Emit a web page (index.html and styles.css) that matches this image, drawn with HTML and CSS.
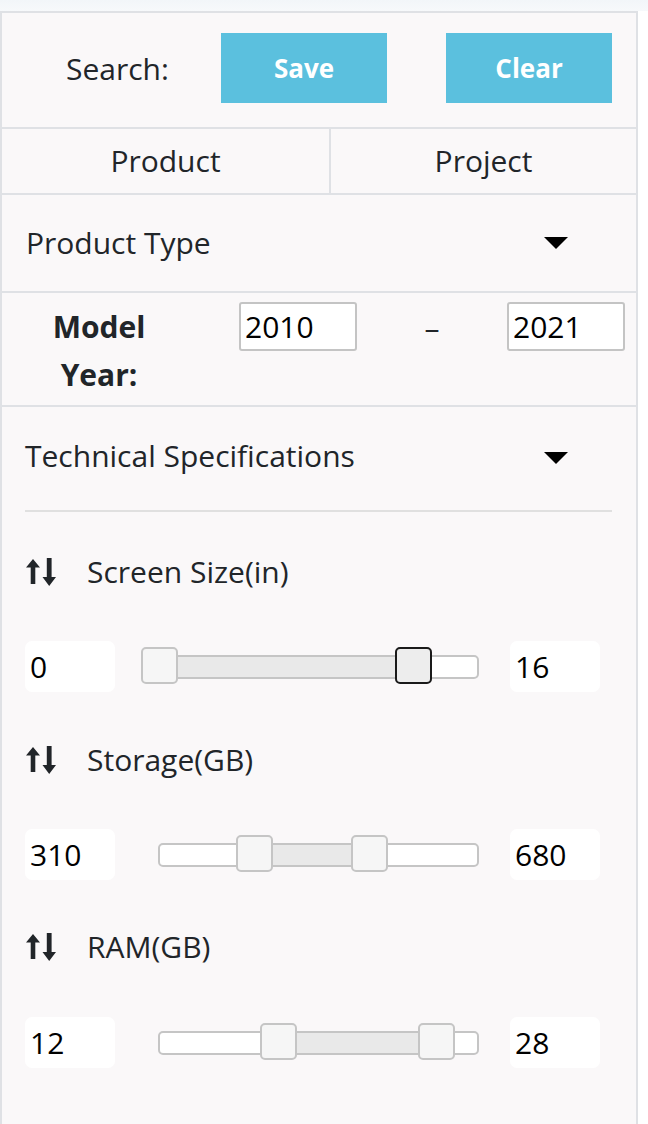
FILE: index.html
```html
<!DOCTYPE html>
<html>
<head>
<meta charset="utf-8">
<link rel="stylesheet" href="styles.css">
</head>
<body>
<div class="topband"></div>
<div class="panel">
  <div class="row search-row">
    <span class="search-label">Search:</span>
    <button class="btn">Save</button>
    <button class="btn">Clear</button>
  </div>
  <div class="row tabs">
    <div class="tab">Product</div>
    <div class="tab">Project</div>
  </div>
  <div class="row dropdown-row">
    <span>Product Type</span>
    <span class="caret"></span>
  </div>
  <div class="row year-row">
    <div class="year-label">Model<br>Year:</div>
    <input class="year-input first" type="text" value="2010">
    <span class="dash">–</span>
    <input class="year-input" type="text" value="2021">
  </div>
  <div class="tech">
    <div class="tech-head">
      <span>Technical Specifications</span>
      <span class="caret"></span>
    </div>
    <div class="divider"></div>

    <div class="spec first">
      <div class="spec-head">
        <svg class="sort-icon" viewBox="0 0 30 28" width="30" height="28"><path d="M7 1 L14 9.5 H9.3 V26 H4.7 V9.5 H0 Z" fill="#212529"/><path d="M20.8 0 H25.6 V19 H30 L23.2 28 L16.5 19 H20.8 Z" fill="#212529"/></svg>
        <span>Screen Size(in)</span>
      </div>
      <div class="slider-row">
        <input class="num" type="text" value="0">
        <div class="track">
          <div class="range" style="left:0%;width:80%"></div>
          <div class="handle" style="left:0%"></div>
          <div class="handle active" style="left:80%"></div>
        </div>
        <input class="num" type="text" value="16">
      </div>
    </div>

    <div class="spec">
      <div class="spec-head">
        <svg class="sort-icon" viewBox="0 0 30 28" width="30" height="28"><path d="M7 1 L14 9.5 H9.3 V26 H4.7 V9.5 H0 Z" fill="#212529"/><path d="M20.8 0 H25.6 V19 H30 L23.2 28 L16.5 19 H20.8 Z" fill="#212529"/></svg>
        <span>Storage(GB)</span>
      </div>
      <div class="slider-row">
        <input class="num" type="text" value="310">
        <div class="track">
          <div class="range" style="left:30.1%;width:36.1%"></div>
          <div class="handle" style="left:30.1%"></div>
          <div class="handle" style="left:66.2%"></div>
        </div>
        <input class="num" type="text" value="680">
      </div>
    </div>

    <div class="spec last">
      <div class="spec-head">
        <svg class="sort-icon" viewBox="0 0 30 28" width="30" height="28"><path d="M7 1 L14 9.5 H9.3 V26 H4.7 V9.5 H0 Z" fill="#212529"/><path d="M20.8 0 H25.6 V19 H30 L23.2 28 L16.5 19 H20.8 Z" fill="#212529"/></svg>
        <span>RAM(GB)</span>
      </div>
      <div class="slider-row">
        <input class="num" type="text" value="12">
        <div class="track">
          <div class="range" style="left:37.5%;width:50%"></div>
          <div class="handle" style="left:37.5%"></div>
          <div class="handle" style="left:87.4%"></div>
        </div>
        <input class="num" type="text" value="28">
      </div>
    </div>
  </div>
</div>
</body>
</html>
```
FILE: styles.css
```css
html, body {
  margin: 0;
  padding: 0;
  background: #ffffff;
}
body {
  font-family: "Open Sans", "Noto Sans", sans-serif;
  color: #212529;
  font-size: 30px;
  line-height: 1.2;
  width: 648px;
  height: 1124px;
  overflow: hidden;
}
.topband {
  height: 11px;
  background: linear-gradient(#f2f6f9, #f7f9fb);
}
.panel {
  width: 634px;
  height: 1111px;
  border: 2px solid #dfe1e5;
  border-bottom: none;
  background: #faf8f9;
}
.row {
  border-bottom: 2px solid #dfe1e5;
  display: flex;
  align-items: center;
  box-sizing: content-box;
}
.search-row {
  height: 94px;
  padding-top: 20px;
  padding-left: 64px;
  align-items: flex-start;
}
.search-label {
  width: 155px;
  height: 70px;
  line-height: 72px;
}
.btn {
  width: 166px;
  height: 70px;
  border: none;
  background: #5bc0de;
  color: #ffffff;
  font-family: inherit;
  font-size: 26px;
  font-weight: 700;
  padding: 0;
}
.btn + .btn {
  margin-left: 59px;
}
.tabs {
  height: 64px;
}
.tab {
  height: 100%;
  display: flex;
  align-items: center;
  justify-content: center;
}
.tab:first-child {
  width: 327px;
  border-right: 2px solid #dfe1e5;
}
.tab:last-child {
  flex: 1;
}
.dropdown-row {
  height: 96px;
  padding-left: 24px;
  padding-right: 68px;
  justify-content: space-between;
}
.caret {
  width: 0;
  height: 0;
  border-left: 12px solid transparent;
  border-right: 12px solid transparent;
  border-top: 12px solid #000;
}
.year-row {
  height: 103px;
  padding-top: 9px;
  align-items: flex-start;
}
.year-label {
  width: 190px;
  margin-top: 1px;
  text-align: center;
  font-weight: 700;
  line-height: 48px;
  margin-left: 2px;
}
.year-input {
  width: 118px;
  height: 49px;
  box-sizing: border-box;
  border: 2px solid #c4c4c4;
  border-radius: 3px;
  background: #fff;
  font-family: inherit;
  font-size: 30px;
  color: #000;
  padding: 0 4px;
}
.year-input.first {
  margin-left: 45px;
}
.dash {
  width: 150px;
  text-align: center;
  line-height: 52px;
}
.tech {
  padding: 0 24px 0 23px;
}
.tech-head {
  height: 103px;
  box-sizing: border-box;
  padding-bottom: 5px;
  display: flex;
  align-items: center;
  justify-content: space-between;
  padding-right: 44px;
}
.tech-head .caret {
  margin-top: 4px;
}
.divider {
  height: 2px;
  background: #e0e0e0;
}
.spec-head {
  height: 36px;
  margin-top: 50px;
  display: flex;
  align-items: center;
  gap: 31px;
}
.spec.first .spec-head {
  margin-top: 42px;
}
.spec.last .spec-head {
  margin-top: 49px;
}
.sort-icon {
  display: block;
  margin-left: 1px;
}
.slider-row {
  display: flex;
  align-items: center;
  margin-top: 51px;
}
.spec.last .slider-row {
  margin-top: 52px;
}
.num {
  width: 90px;
  height: 51px;
  box-sizing: border-box;
  border: none;
  border-radius: 7px;
  background: #fff;
  font-family: inherit;
  font-size: 30px;
  color: #000;
  padding: 0 5px;
}
.track {
  position: relative;
  width: 321px;
  height: 24px;
  box-sizing: border-box;
  margin-left: 43px;
  margin-right: 31px;
  border: 2px solid #c5c5c5;
  border-radius: 5px;
  background: #fff;
}
.range {
  position: absolute;
  top: 0;
  bottom: 0;
  background: #e9e9e9;
}
.handle {
  position: absolute;
  top: -10px;
  width: 37px;
  height: 37px;
  margin-left: -19px;
  box-sizing: border-box;
  border: 2px solid #c5c5c5;
  border-radius: 5px;
  background: #f6f6f6;
}
.handle.active {
  border-color: #1a1a1a;
  background: #ededed;
}
```
